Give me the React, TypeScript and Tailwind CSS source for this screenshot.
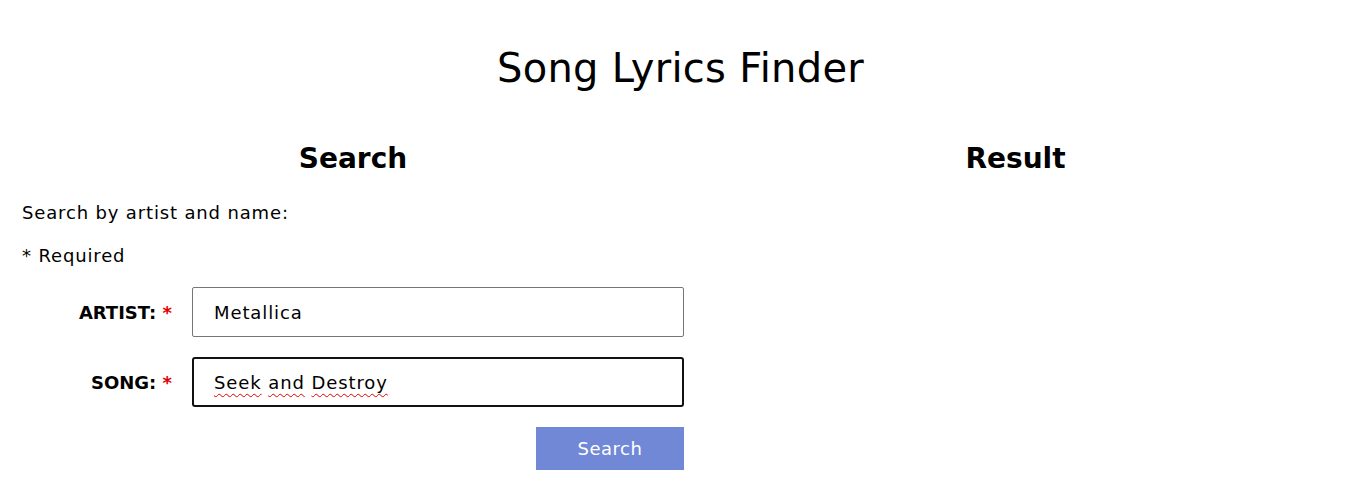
import { useState } from "react";

function Field({ label, children }: { label: string; children: React.ReactNode }) {
  return (
    <div className="flex items-center">
      <label className="w-[150px] text-right text-[18px] font-bold uppercase">
        {label} <span className="text-[#e00000]">*</span>
      </label>
      <div className="ml-5 flex-1">{children}</div>
    </div>
  );
}

export default function App() {
  const [artist, setArtist] = useState("Metallica");

  return (
    <div className="min-h-[496px] bg-white px-[22px] text-black" style={{ fontFamily: '"DejaVu Sans", sans-serif' }}>
      <h1 className="pt-[42px] text-center text-[40px] font-normal leading-[52px] tracking-[0.3px]">Song Lyrics Finder</h1>

      <div className="mt-[45px] grid grid-cols-[662px_1fr] gap-2">
        <section>
          <h2 className="text-center text-[28px] font-bold leading-[40px]">Search</h2>
          <p className="mt-[22px] text-[18px] leading-[24px] tracking-[0.85px]">Search by artist and name:</p>
          <p className="mt-[19px] text-[18px] leading-[24px] tracking-[0.85px]">* Required</p>

          <form className="mt-[19px] flex flex-col gap-5" onSubmit={(e) => e.preventDefault()}>
            <Field label="Artist:">
              <input
                value={artist}
                onChange={(e) => setArtist(e.target.value)}
                className="h-[50px] w-full rounded-[2px] border border-[#767676] px-[21px] text-[18px] tracking-[0.9px] outline-none"
              />
            </Field>
            <Field label="Song:">
              <div className="flex h-[50px] w-full items-center rounded-[3px] border-2 border-[#111] px-[20px] text-[18px] tracking-[0.9px]">
                <span className="underline decoration-[#e00000] decoration-wavy decoration-1 underline-offset-4">Seek</span>
                <span>&nbsp;</span>
                <span className="underline decoration-[#e00000] decoration-wavy decoration-1 underline-offset-4">and</span>
                <span>&nbsp;</span>
                <span className="underline decoration-[#e00000] decoration-wavy decoration-1 underline-offset-4">Destroy</span>
              </div>
            </Field>
            <div className="flex justify-end">
              <button type="submit" className="h-[43px] w-[148px] bg-[#7088d6] text-[18px] tracking-[0.5px] text-white">
                Search
              </button>
            </div>
          </form>
        </section>

        <section>
          <h2 className="text-center text-[28px] font-bold leading-[40px]">Result</h2>
        </section>
      </div>
    </div>
  );
}
